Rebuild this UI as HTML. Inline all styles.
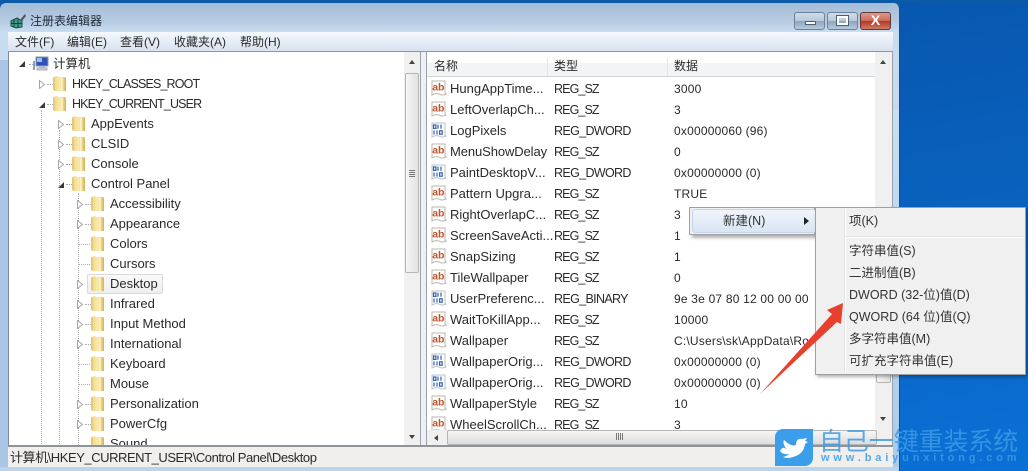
<!DOCTYPE html>
<html lang="zh"><head><meta charset="utf-8"><title>注册表编辑器</title>
<style>
html,body{margin:0;padding:0}
body{position:relative;width:1028px;height:471px;overflow:hidden;background:#0a62bd;font:13px/20px "Liberation Sans","Noto Sans CJK SC",sans-serif;color:#2a2a2a}
div,svg{position:absolute}
span{position:absolute;white-space:nowrap}
.t{height:20px;line-height:20px;white-space:nowrap}
.c{font-size:12px}
.f{width:15px;height:17px}
.x{width:8px;height:9px}
.d{border-top:1px dotted #aaa;height:0;width:6px}
.r{position:absolute;left:0;height:21px;width:450px;line-height:21px}
.r svg{left:4px;top:2px;width:16px;height:17px}
.r span{top:1px}
.r span.n{left:23px;top:0}
.r span.n.g{letter-spacing:-.1px}
.y{left:127px;font-size:12.5px;letter-spacing:-.9px}
.y.w{letter-spacing:-.65px}
.v{left:247px;font-size:12px;letter-spacing:.2px}
.m{left:849px;height:22px;line-height:22px;font-size:12.5px;color:#333;white-space:nowrap}
</style></head><body>
<svg width="0" height="0" style="position:absolute"><defs>
<linearGradient id="fg" x1="0" x2="1" y1="0" y2="0"><stop offset="0" stop-color="#f0d47c"/><stop offset=".5" stop-color="#f8e9ad"/><stop offset=".78" stop-color="#f2d886"/><stop offset="1" stop-color="#cfae60"/></linearGradient>
<symbol id="fo" viewBox="0 0 15 17"><path d="M1 2 L5 1 L6 2 H13 L14 3 V16 H3 L1 15Z" fill="url(#fg)"/><path d="M9 3 L10.5 2 V16 H9Z" fill="#fbf3d2"/><path d="M1 2 L3 4 V16 L1 15Z" fill="#e6c878"/></symbol>
<symbol id="op" viewBox="0 0 8 9"><path d="M1.5 .5 L6.5 4.5 L1.5 8.5Z" fill="#fff" stroke="#a6a6a6"/></symbol>
<symbol id="cl" viewBox="0 0 8 9"><path d="M7 2 V8 H1Z" fill="#3a3a3a"/></symbol>
<symbol id="ab" viewBox="0 0 16 17"><path d="M1 1 H14 V13 L15 14 Q11 16 8 14 Q4 13 1 15Z" fill="#fff" stroke="#bdb6ad"/><path d="M1.5 2 H12.5 V12.5 H1.5Z" fill="#fff"/><text x="1.2" y="10.6" font-family="Liberation Sans" font-size="10.5" font-weight="700" fill="#c4532a">ab</text></symbol>
<symbol id="bi" viewBox="0 0 16 17"><path d="M1 1 H14 V13 L15 14 Q11 16 8 14 Q4 13 1 15Z" fill="#fff" stroke="#bcc0c8"/><g fill="none" stroke="#2f5fb0" stroke-width="1.2"><rect x="2.5" y="3" width="2.4" height="3.4"/><path d="M7 2.6V6.7M10 2.6V6.7"/><path d="M3 8.5V12.5M6 8.5V12.5"/><rect x="8.6" y="8.8" width="2.6" height="3.4"/></g></symbol>
</defs></svg>

<!-- desktop -->
<div style="left:900px;top:0;width:128px;height:471px;background:linear-gradient(170deg,#0757ae 0%,#0a63c0 50%,#0a70d6 100%)"></div>
<div style="left:0;top:0;width:1028px;height:3px;background:#0b5aa5"></div>

<!-- window frame -->
<div style="left:0;top:3px;width:899px;height:468px;border-right:1px solid #1c4f80;box-sizing:content-box;border-radius:6px 6px 0 0;background:linear-gradient(180deg,#a3bcd6 0,#b8cde3 20px,#c9ddf0 29px,#b3cee8 100%)"></div>
<div style="left:893px;top:110px;width:6px;height:361px;background:linear-gradient(180deg,#c9def2,#a9cbea)"></div>
<div style="left:0;top:60px;width:8px;height:411px;background:#a9c6e4"></div>
<div style="left:0;top:467px;width:899px;height:4px;background:#b9d4ec"></div>

<!-- title -->
<svg style="left:10px;top:13px" width="17" height="16" viewBox="0 0 17 16"><path d="M1 8 L7 5 L12 8 V14 L6 15 L1 13Z" fill="#3f9c8c" stroke="#1c4f46"/><path d="M4 7V14M8 6V15M1 10.5L12 10.5" stroke="#123" stroke-width=".7"/><path d="M10 7 L15 1 L16 3 L12 8Z" fill="#4a5a5a"/></svg>
<div class="t c" style="left:30px;top:11px;color:#1c2a38">注册表编辑器</div>

<!-- window buttons -->
<div style="left:794px;top:12px;width:29px;height:16px;border:1px solid #6d8199;border-radius:3px;background:linear-gradient(180deg,#cfdcea 0,#b9cadc 48%,#8ea5bd 52%,#b7cade 100%)"></div>
<div style="left:805px;top:21px;width:9px;height:2px;background:#fff;border:1px solid #4b5f75"></div>
<div style="left:827px;top:12px;width:29px;height:16px;border:1px solid #6d8199;border-radius:3px;background:linear-gradient(180deg,#cfdcea 0,#b9cadc 48%,#8ea5bd 52%,#b7cade 100%)"></div>
<div style="left:837px;top:16px;width:7px;height:5px;border:2px solid #fff;outline:1px solid #4b5f75"></div>
<div style="left:860px;top:12px;width:29px;height:16px;border:1px solid #5d3a3c;border-radius:3px;background:linear-gradient(180deg,#dd9a8c 0,#cc6a58 48%,#b23a28 52%,#cf7a62 100%)"></div>
<div style="left:860px;top:12px;width:31px;height:18px;line-height:17px;text-align:center;color:#fff;font-size:14px;font-weight:700">X</div>

<!-- menu -->
<div style="left:8px;top:32px;width:885px;height:19px;background:linear-gradient(180deg,#f5f9fd 0,#e6edf6 50%,#d9e1ef 100%)"></div>
<div style="left:8px;top:51px;width:885px;height:1px;background:#8b98a8"></div>
<div class="t c" style="left:15px;top:32px">文件(F)</div>
<div class="t c" style="left:67px;top:32px">编辑(E)</div>
<div class="t c" style="left:120px;top:32px">查看(V)</div>
<div class="t c" style="left:174px;top:32px">收藏夹(A)</div>
<div class="t c" style="left:240px;top:32px">帮助(H)</div>

<!-- client -->
<div style="left:8px;top:52px;width:885px;height:395px;background:#f0f0f0"></div>
<div style="left:8px;top:52px;width:396px;height:394px;background:#fff"></div>
<div style="left:426px;top:52px;width:1px;height:394px;background:#9aa3ad"></div>
<div style="left:420px;top:52px;width:1px;height:394px;background:#9aa3ad"></div>
<div style="left:892px;top:52px;width:1px;height:394px;background:#9aa3ad"></div>
<div style="left:8px;top:52px;width:1px;height:394px;background:#7f8b99"></div>

<!-- tree -->
<div style="left:8px;top:53px;width:396px;height:393px;overflow:hidden">
<div style="left:33px;top:57px;height:340px;border-left:1px dotted #aaa"></div>
<div style="left:51px;top:77px;height:320px;border-left:1px dotted #aaa"></div>
<div style="left:70px;top:140px;height:260px;border-left:1px dotted #aaa"></div>
</div>
<svg class="x" style="left:18px;top:59px"><use href="#cl"/></svg>
<div class="d" style="left:29px;top:64px;width:4px"></div>
<svg style="left:33px;top:56px" width="16" height="16" viewBox="0 0 16 16"><rect x="3" y="1" width="12" height="9" fill="#2f53b8" stroke="#8d99a8"/><rect x="4" y="2" width="5" height="4" fill="#9cc1ee"/><rect x="6" y="10" width="6" height="2" fill="#b9c2cc"/><rect x="4" y="12" width="10" height="2" fill="#d4d9de" stroke="#aab"/><rect x="0" y="5" width="2" height="9" fill="#8aa0b4"/></svg>
<div class="t c" style="left:53px;top:54px;font-size:12.5px">计算机</div>

<svg class="x" style="left:38px;top:80px"><use href="#op"/></svg><div class="d" style="left:47px;top:84px"></div><svg class="f" style="left:52px;top:75px"><use href="#fo"/></svg><div class="t" style="left:72px;top:74px;font-size:12.5px;letter-spacing:-.85px">HKEY_CLASSES_ROOT</div>
<svg class="x" style="left:38px;top:100px"><use href="#cl"/></svg><div class="d" style="left:47px;top:104px"></div><svg class="f" style="left:52px;top:95px"><use href="#fo"/></svg><div class="t" style="left:72px;top:94px;font-size:12.5px;letter-spacing:-.85px">HKEY_CURRENT_USER</div>

<svg class="x" style="left:57px;top:120px"><use href="#op"/></svg><div class="d" style="left:66px;top:124px"></div><svg class="f" style="left:71px;top:115px"><use href="#fo"/></svg><div class="t" style="left:91px;top:114px">AppEvents</div>
<svg class="x" style="left:57px;top:140px"><use href="#op"/></svg><div class="d" style="left:66px;top:144px"></div><svg class="f" style="left:71px;top:135px"><use href="#fo"/></svg><div class="t" style="left:91px;top:134px">CLSID</div>
<svg class="x" style="left:57px;top:160px"><use href="#op"/></svg><div class="d" style="left:66px;top:164px"></div><svg class="f" style="left:71px;top:155px"><use href="#fo"/></svg><div class="t" style="left:91px;top:154px">Console</div>
<svg class="x" style="left:57px;top:180px"><use href="#cl"/></svg><div class="d" style="left:66px;top:184px"></div><svg class="f" style="left:71px;top:175px"><use href="#fo"/></svg><div class="t" style="left:91px;top:174px">Control Panel</div>

<div style="left:87px;top:274px;width:74px;height:18px;border:1px solid #d9d9d9;border-radius:2px;background:linear-gradient(180deg,#fafafa,#eeeeee)"></div>

<svg class="x" style="left:76px;top:200px"><use href="#op"/></svg><div class="d" style="left:85px;top:204px"></div><svg class="f" style="left:90px;top:195px"><use href="#fo"/></svg><div class="t" style="left:110px;top:194px">Accessibility</div>
<svg class="x" style="left:76px;top:220px"><use href="#op"/></svg><div class="d" style="left:85px;top:224px"></div><svg class="f" style="left:90px;top:215px"><use href="#fo"/></svg><div class="t" style="left:110px;top:214px">Appearance</div>
<div class="d" style="left:79px;top:244px;width:11px"></div><svg class="f" style="left:90px;top:235px"><use href="#fo"/></svg><div class="t" style="left:110px;top:234px">Colors</div>
<div class="d" style="left:79px;top:264px;width:11px"></div><svg class="f" style="left:90px;top:255px"><use href="#fo"/></svg><div class="t" style="left:110px;top:254px">Cursors</div>
<svg class="x" style="left:76px;top:280px"><use href="#op"/></svg><svg class="f" style="left:90px;top:275px"><use href="#fo"/></svg><div class="t" style="left:110px;top:274px">Desktop</div>
<svg class="x" style="left:76px;top:300px"><use href="#op"/></svg><div class="d" style="left:85px;top:304px"></div><svg class="f" style="left:90px;top:295px"><use href="#fo"/></svg><div class="t" style="left:110px;top:294px">Infrared</div>
<svg class="x" style="left:76px;top:320px"><use href="#op"/></svg><div class="d" style="left:85px;top:324px"></div><svg class="f" style="left:90px;top:315px"><use href="#fo"/></svg><div class="t" style="left:110px;top:314px">Input Method</div>
<svg class="x" style="left:76px;top:340px"><use href="#op"/></svg><div class="d" style="left:85px;top:344px"></div><svg class="f" style="left:90px;top:335px"><use href="#fo"/></svg><div class="t" style="left:110px;top:334px">International</div>
<div class="d" style="left:79px;top:364px;width:11px"></div><svg class="f" style="left:90px;top:355px"><use href="#fo"/></svg><div class="t" style="left:110px;top:354px">Keyboard</div>
<div class="d" style="left:79px;top:384px;width:11px"></div><svg class="f" style="left:90px;top:375px"><use href="#fo"/></svg><div class="t" style="left:110px;top:374px">Mouse</div>
<svg class="x" style="left:76px;top:400px"><use href="#op"/></svg><div class="d" style="left:85px;top:404px"></div><svg class="f" style="left:90px;top:395px"><use href="#fo"/></svg><div class="t" style="left:110px;top:394px">Personalization</div>
<svg class="x" style="left:76px;top:420px"><use href="#op"/></svg><div class="d" style="left:85px;top:424px"></div><svg class="f" style="left:90px;top:415px"><use href="#fo"/></svg><div class="t" style="left:110px;top:414px">PowerCfg</div>
<div style="left:9px;top:435px;width:395px;height:11px;overflow:hidden"><svg class="f" style="left:81px;top:0"><use href="#fo"/></svg><div class="t" style="left:101px;top:-1px">Sound</div></div>

<!-- tree scrollbar -->
<div style="left:404px;top:53px;width:16px;height:393px;background:#f0f0f0"></div>
<div style="left:405px;top:73px;width:14px;height:200px;border:1px solid #b5b5b5;border-radius:2px;box-sizing:border-box;background:linear-gradient(90deg,#f6f6f6,#e2e2e2)"></div>
<div style="left:409px;top:170px;width:6px;height:7px;background:repeating-linear-gradient(180deg,#777 0 1px,transparent 1px 2px)"></div>
<div style="left:409px;top:60px;border:3px solid transparent;border-bottom:4px solid #444;border-top:0"></div>
<div style="left:409px;top:435px;border:3px solid transparent;border-top:4px solid #444;border-bottom:0"></div>

<!-- list -->
<div style="left:427px;top:52px;width:448px;height:378px;overflow:hidden;background:#fff">
<div style="left:0;top:11px;width:448px;height:13px;background:#f3f4f6"></div>
<div style="left:0;top:24px;width:448px;height:1px;background:#d5d5d5"></div>
<div style="left:120px;top:6px;width:1px;height:18px;background:#e4e4e4"></div>
<div style="left:240px;top:6px;width:1px;height:18px;background:#e4e4e4"></div>
<div class="t" style="left:7px;top:4px;font-size:12px">名称</div>
<div class="t" style="left:127px;top:4px;font-size:12px">类型</div>
<div class="t" style="left:247px;top:4px;font-size:12px">数据</div>
<div class="r" style="top:26px"><svg><use href="#ab"/></svg><span class="n">HungAppTime...</span><span class="y">REG_SZ</span><span class="v">3000</span></div>
<div class="r" style="top:47px"><svg><use href="#ab"/></svg><span class="n">LeftOverlapCh...</span><span class="y">REG_SZ</span><span class="v">3</span></div>
<div class="r" style="top:68px"><svg><use href="#bi"/></svg><span class="n">LogPixels</span><span class="y w">REG_DWORD</span><span class="v">0x00000060 (96)</span></div>
<div class="r" style="top:89px"><svg><use href="#ab"/></svg><span class="n g">MenuShowDelay</span><span class="y">REG_SZ</span><span class="v">0</span></div>
<div class="r" style="top:110px"><svg><use href="#bi"/></svg><span class="n">PaintDesktopV...</span><span class="y w">REG_DWORD</span><span class="v">0x00000000 (0)</span></div>
<div class="r" style="top:131px"><svg><use href="#ab"/></svg><span class="n">Pattern Upgra...</span><span class="y">REG_SZ</span><span class="v">TRUE</span></div>
<div class="r" style="top:152px"><svg><use href="#ab"/></svg><span class="n">RightOverlapC...</span><span class="y">REG_SZ</span><span class="v">3</span></div>
<div class="r" style="top:173px"><svg><use href="#ab"/></svg><span class="n">ScreenSaveActi...</span><span class="y">REG_SZ</span><span class="v">1</span></div>
<div class="r" style="top:194px"><svg><use href="#ab"/></svg><span class="n">SnapSizing</span><span class="y">REG_SZ</span><span class="v">1</span></div>
<div class="r" style="top:215px"><svg><use href="#ab"/></svg><span class="n">TileWallpaper</span><span class="y">REG_SZ</span><span class="v">0</span></div>
<div class="r" style="top:236px"><svg><use href="#bi"/></svg><span class="n">UserPreferenc...</span><span class="y w">REG_BINARY</span><span class="v">9e 3e 07 80 12 00 00 00</span></div>
<div class="r" style="top:257px"><svg><use href="#ab"/></svg><span class="n">WaitToKillApp...</span><span class="y">REG_SZ</span><span class="v">10000</span></div>
<div class="r" style="top:278px"><svg><use href="#ab"/></svg><span class="n">Wallpaper</span><span class="y">REG_SZ</span><span class="v">C:\Users\sk\AppData\Ro</span></div>
<div class="r" style="top:299px"><svg><use href="#bi"/></svg><span class="n">WallpaperOrig...</span><span class="y w">REG_DWORD</span><span class="v">0x00000000 (0)</span></div>
<div class="r" style="top:320px"><svg><use href="#bi"/></svg><span class="n">WallpaperOrig...</span><span class="y w">REG_DWORD</span><span class="v">0x00000000 (0)</span></div>
<div class="r" style="top:341px"><svg><use href="#ab"/></svg><span class="n">WallpaperStyle</span><span class="y">REG_SZ</span><span class="v">10</span></div>
<div class="r" style="top:362px"><svg><use href="#ab"/></svg><span class="n">WheelScrollCh...</span><span class="y">REG_SZ</span><span class="v">3</span></div>
</div>

<!-- list v scrollbar -->
<div style="left:875px;top:53px;width:17px;height:393px;background:#f0f0f0"></div>
<div style="left:876px;top:340px;width:15px;height:43px;border:1px solid #b5b5b5;border-radius:2px;box-sizing:border-box;background:linear-gradient(90deg,#f6f6f6,#e2e2e2)"></div>
<div style="left:880px;top:60px;border:3px solid transparent;border-bottom:4px solid #444;border-top:0"></div>
<div style="left:880px;top:417px;border:3px solid transparent;border-top:4px solid #444;border-bottom:0"></div>

<!-- list h scrollbar -->
<div style="left:427px;top:430px;width:448px;height:16px;background:#f0f0f0"></div>
<div style="left:447px;top:430px;width:430px;height:15px;border:1px solid #b5b5b5;border-radius:2px;box-sizing:border-box;background:linear-gradient(180deg,#f6f6f6,#dcdcdc)"></div>
<div style="left:616px;top:433px;width:7px;height:7px;background:repeating-linear-gradient(90deg,#777 0 1px,transparent 1px 2px)"></div>
<div style="left:434px;top:435px;border:3px solid transparent;border-right:4px solid #444;border-left:0"></div>

<!-- status -->
<div style="left:8px;top:445px;width:885px;height:2px;background:#8f9498"></div>
<div style="left:8px;top:447px;width:885px;height:20px;background:#f0efee"></div>
<div class="t" style="left:10px;top:448px;font-size:13px;letter-spacing:-.45px">计算机\HKEY_CURRENT_USER\Control Panel\Desktop</div>

<!-- context menus -->
<div style="left:689px;top:207px;width:126px;height:28px;box-sizing:border-box;border:1px solid #a0a0a0;background:#f0f0f0;box-shadow:3px 3px 3px rgba(0,0,0,.3)"></div>
<div style="left:692px;top:209px;width:124px;height:24px;border-radius:3px;box-sizing:border-box;border:1px solid #c5d4e6;background:linear-gradient(180deg,#f0f5fb,#d8e5f4)"></div>
<div class="t" style="left:723px;top:211px;font-size:12.5px;color:#333">新建(N)</div>
<div style="left:804px;top:217px;border:4px solid transparent;border-left:5px solid #222;border-right:0"></div>

<div style="left:815px;top:207px;width:211px;height:168px;box-sizing:border-box;border:1px solid #a0a0a0;background:#f0f0f0;box-shadow:2px 2px 3px rgba(0,0,0,.3)"></div>
<div style="left:844px;top:209px;width:1px;height:164px;background:#e2e3e3"></div>
<div style="left:845px;top:209px;width:1px;height:164px;background:#fff"></div>
<div style="left:845px;top:236px;width:179px;height:1px;background:#e0e0e0"></div>
<div style="left:845px;top:237px;width:179px;height:1px;background:#fff"></div>
<div class="m" style="top:210px">项(K)</div>
<div class="m" style="top:240px">字符串值(S)</div>
<div class="m" style="top:262px">二进制值(B)</div>
<div class="m" style="top:284px">DWORD (32-位)值(D)</div>
<div class="m" style="top:306px">QWORD (64 位)值(Q)</div>
<div class="m" style="top:328px">多字符串值(M)</div>
<div class="m" style="top:350px">可扩充字符串值(E)</div>

<!-- red arrow -->
<svg style="left:750px;top:295px" width="100" height="105" viewBox="0 0 100 105"><path d="M93 8 L77 15 L82 19 L10 99 L87 27 L91 29Z" fill="#e8402f"/></svg>

<!-- logo -->
<div style="left:775px;top:429px;width:38px;height:37px;background:#3b9eea;border-radius:8px 0 8px 0"></div>
<svg style="left:778px;top:433px" width="32" height="30" viewBox="0 0 32 30"><path d="M2 18 Q5 12 9 17 Q4 10 6 7 Q13 14 18 12 Q18 5 24 6 L29 5 L27 8 L30 9 L27 11 Q26 21 15 24 Q9 26 5 24 Q9 23 11 21 Q5 22 2 18Z" fill="#fff"/></svg>
<div class="t" style="left:819px;top:428px;height:28px;line-height:28px;font-size:25px;color:rgba(60,155,230,.85);font-weight:400;letter-spacing:-.1px">自己一键重装系统</div>
<div class="t" style="left:821px;top:452px;height:13px;line-height:13px;font-size:11px;font-weight:700;color:rgba(60,155,230,.85);letter-spacing:3.85px">www.baiyunxitong.com</div>
</body></html>
